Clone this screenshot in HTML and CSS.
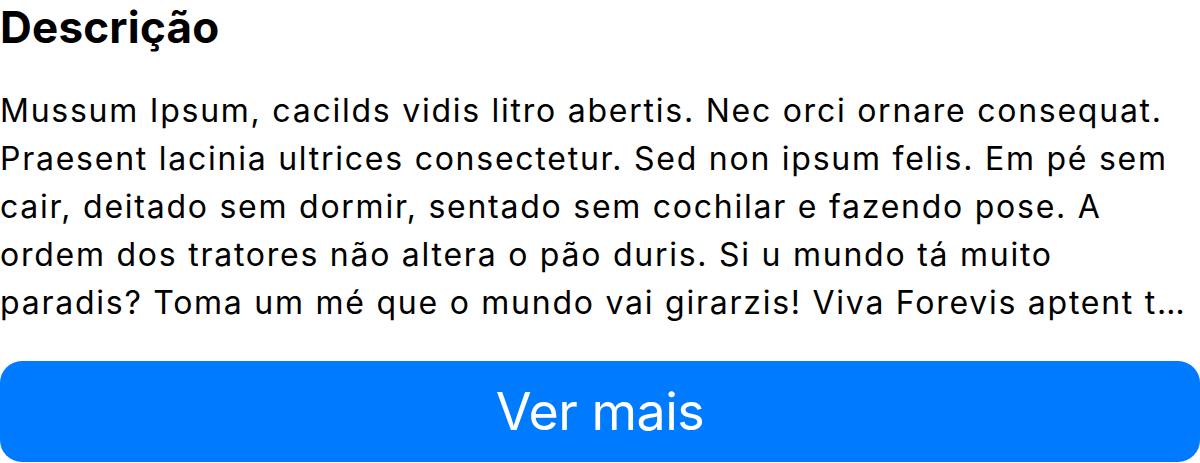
FILE: index.html
```html
<!DOCTYPE html>
<html lang="pt-BR">
<head>
<meta charset="utf-8">
<link rel="stylesheet" href="styles.css">
</head>
<body>
<section class="description">
  <h2 class="description__title">Descrição</h2>
  <p class="description__text">Mussum Ipsum, cacilds vidis litro abertis. Nec orci ornare consequat. Praesent lacinia ultrices consectetur. Sed non ipsum felis. Em pé sem cair, deitado sem dormir, sentado sem cochilar e fazendo pose. A ordem dos tratores não altera o pão duris. Si u mundo tá muito paradis? Toma um mé que o mundo vai girarzis! Viva Forevis aptent t…</p>
  <button class="description__button" type="button">Ver mais</button>
</section>
</body>
</html>
```
FILE: styles.css
```css
html, body {
  margin: 0;
  padding: 0;
  background: #ffffff;
}
body {
  font-family: Inter, "Noto Sans", sans-serif;
  color: #000000;
  width: 1200px;
  height: 463px;
  overflow: hidden;
}
.description {
  display: flex;
  flex-direction: column;
  padding-top: 1px;
}
.description__title {
  margin: 0;
  font-size: 44px;
  font-weight: 700;
  line-height: 52px;
  letter-spacing: 0.2px;
}
.description__text {
  margin: 34px 0 0 0;
  font-size: 32px;
  line-height: 48px;
  font-weight: 400;
  letter-spacing: 1.75px;
}
.description__button {
  margin-top: 34px;
  height: 101px;
  width: 100%;
  border: none;
  border-radius: 22px;
  background: #007aff;
  color: #ffffff;
  font-family: Inter, "Noto Sans", sans-serif;
  font-size: 52px;
  font-weight: 400;
  letter-spacing: -0.5px;
  padding: 0;
}
```
